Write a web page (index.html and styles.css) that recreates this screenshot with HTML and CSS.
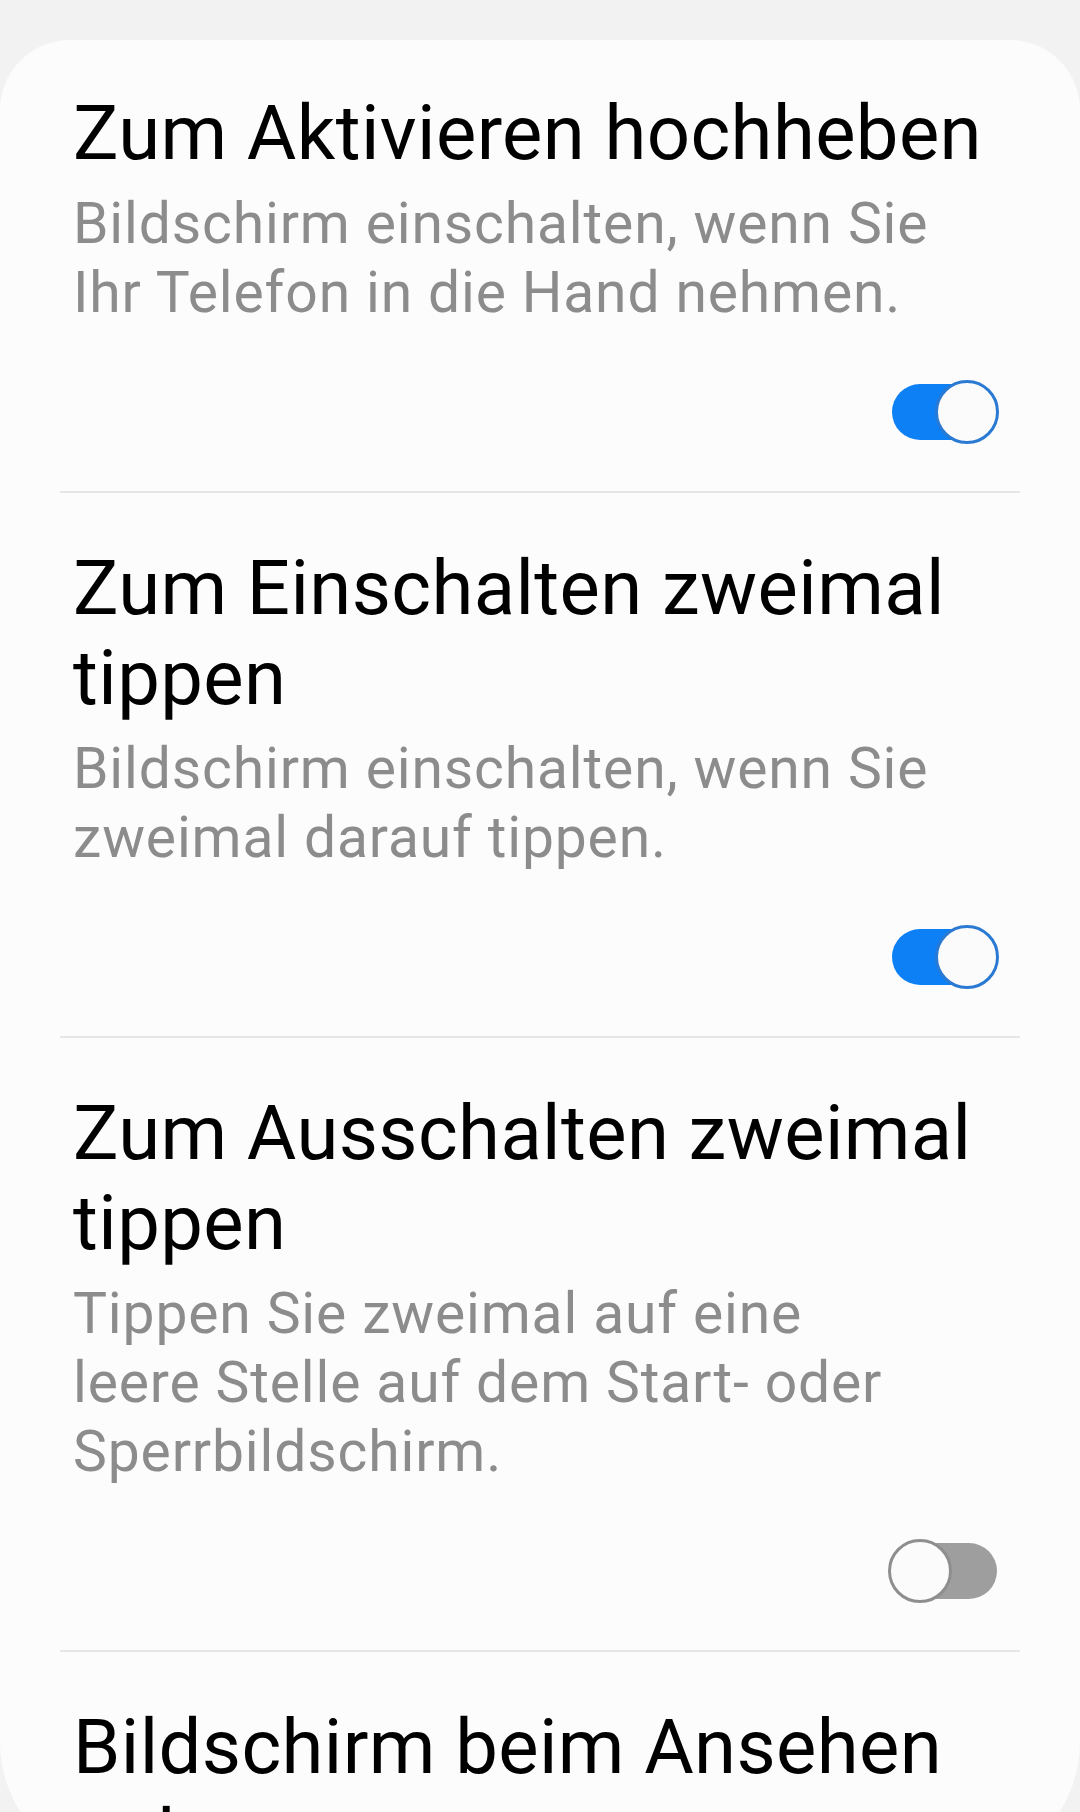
FILE: index.html
```html
<!DOCTYPE html>
<html lang="de">
<head>
<meta charset="utf-8">
<title>Einstellungen</title>
<link rel="stylesheet" href="styles.css">
</head>
<body>
<div class="screen">
  <div class="card">
    <div class="item">
      <div class="title">Zum Aktivieren hochheben</div>
      <div class="sub">Bildschirm einschalten, wenn Sie Ihr Telefon in die Hand nehmen.</div>
      <div class="toggle-row"><div class="switch on"><span class="track"></span><span class="thumb"></span></div></div>
    </div>
    <div class="divider"></div>
    <div class="item">
      <div class="title">Zum Einschalten zweimal tippen</div>
      <div class="sub">Bildschirm einschalten, wenn Sie zweimal darauf tippen.</div>
      <div class="toggle-row"><div class="switch on"><span class="track"></span><span class="thumb"></span></div></div>
    </div>
    <div class="divider"></div>
    <div class="item">
      <div class="title">Zum Ausschalten zweimal tippen</div>
      <div class="sub">Tippen Sie zweimal auf eine<br>leere Stelle auf dem Start- oder Sperrbildschirm.</div>
      <div class="toggle-row"><div class="switch off"><span class="track"></span><span class="thumb"></span></div></div>
    </div>
    <div class="divider"></div>
    <div class="item">
      <div class="title">Bildschirm beim Ansehen anlassen</div>
    </div>
  </div>
</div>
</body>
</html>
```

FILE: styles.css
```css
html, body {
  margin: 0;
  padding: 0;
}
body {
  background: #f2f2f2;
  height: 1812px;
  overflow: hidden;
  font-family: Roboto, "Noto Sans", "Liberation Sans", sans-serif;
}
.screen {
  padding-top: 40px;
}
.card {
  background: #fcfcfc;
  border-radius: 70px 70px 130px 130px;
  height: 1832px;
  overflow: hidden;
}
.item {
  display: flex;
  flex-direction: column;
  padding: 50px 81px 47px 73px;
}
.item:first-child {
  padding-top: 48px;
}
.title {
  font-size: 76px;
  line-height: 90px;
  color: #000;
  font-weight: 400;
  letter-spacing: 0.4px;
}
.sub {
  font-size: 57px;
  line-height: 69px;
  color: #8c8c8c;
  margin-top: 11px;
  letter-spacing: 0.85px;
  max-width: 880px;
}
.toggle-row {
  display: flex;
  justify-content: flex-end;
  margin-top: 53px;
}
.switch {
  position: relative;
  width: 111px;
  height: 64px;
}
.track {
  position: absolute;
  left: 4px;
  right: 2px;
  top: 4px;
  height: 56px;
  border-radius: 28px;
}
.thumb {
  position: absolute;
  top: 0;
  width: 64px;
  height: 64px;
  box-sizing: border-box;
  border-radius: 50%;
  background: #fbfbfb;
  border: 3px solid;
}
.switch.on .track { background: #0c80f4; }
.switch.on .thumb { right: 0; border-color: #2a79d2; }
.switch.off .track { background: #9e9e9e; }
.switch.off .thumb { left: 0; border-color: #8e8e8e; }
.divider {
  height: 2px;
  background: #e6e6e6;
  margin: 0 60px;
}
```
